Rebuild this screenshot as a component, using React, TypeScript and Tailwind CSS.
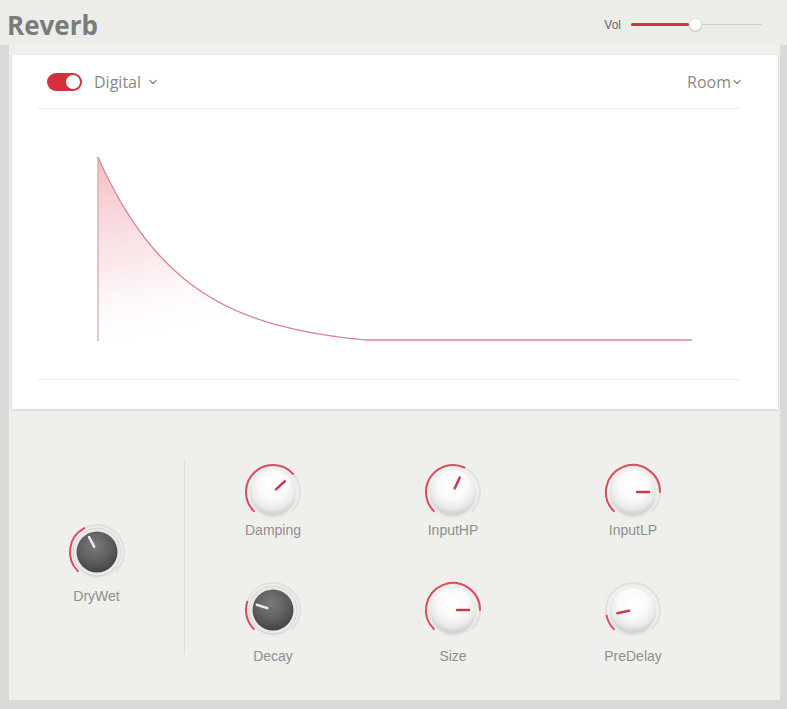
import { ChevronDown } from "lucide-react";

const polar = (a: number, r: number) => {
  const rad = (a * Math.PI) / 180;
  return [35 + r * Math.sin(rad), 35 - r * Math.cos(rad)];
};

const arc = (a0: number, a1: number, r: number) => {
  const [x0, y0] = polar(a0, r);
  const [x1, y1] = polar(a1, r);
  const large = a1 - a0 > 180 ? 1 : 0;
  return `M ${x0} ${y0} A ${r} ${r} 0 ${large} 1 ${x1} ${y1}`;
};

function Knob({ value, label, dark = false, labelTop = "mt-[-5px]" }: { value: number; label: string; dark?: boolean; labelTop?: string }) {
  const [px0, py0] = polar(value, dark ? 6 : 4);
  const [px1, py1] = polar(value, dark ? 17 : 16);
  return (
    <div className="flex flex-col items-center">
      <svg width={70} height={70} viewBox="0 0 70 70">
        <defs>
          <radialGradient id="kLight" cx="50%" cy="35%" r="65%">
            <stop offset="0" stopColor="#ffffff" />
            <stop offset="0.5" stopColor="#fafafa" />
            <stop offset="0.82" stopColor="#e9e9e9" />
            <stop offset="1" stopColor="#d2d2d2" />
          </radialGradient>
          <radialGradient id="kDark" cx="45%" cy="35%" r="70%">
            <stop offset="0" stopColor="#7a7a7a" />
            <stop offset="0.6" stopColor="#5c5c5c" />
            <stop offset="1" stopColor="#3e3e3e" />
          </radialGradient>
          <filter id="kShadow" x="-30%" y="-30%" width="160%" height="160%">
            <feGaussianBlur stdDeviation="1.6" />
          </filter>
        </defs>
        <path d={arc(-135, 135, 27)} stroke="#e0e0df" strokeWidth={2} fill="none" strokeLinecap="round" />
        <path d={arc(-135, value, 27)} stroke="#dc4d5e" strokeWidth={2} fill="none" strokeLinecap="round" />
        <circle cx={35} cy={37.5} r={22} fill="#b5b5b5" opacity={0.55} filter="url(#kShadow)" />
        {dark && <circle cx={35} cy={35} r={24} fill="#e9e9e8" stroke="#d6d6d6" strokeWidth={1} />}
        <circle cx={35} cy={35} r={dark ? 20.5 : 22} fill={dark ? "url(#kDark)" : "url(#kLight)"} />
        <line
          x1={px0}
          y1={py0}
          x2={px1}
          y2={py1}
          stroke={dark ? "#ececec" : "#c93a4d"}
          strokeWidth={2.5}
          strokeLinecap="round"
        />
      </svg>
      <span className={`${labelTop} text-[14px] leading-4 text-[#8f8f8f] font-['Liberation_Sans',sans-serif]`}>{label}</span>
    </div>
  );
}

function DecayGraph() {
  const L = 268;
  const k = 85;
  const e = Math.exp(-L / k);
  const pts: string[] = [];
  for (let t = 0; t <= L; t += 2) {
    const f = (Math.exp(-t / k) - e) / (1 - e);
    pts.push(`${61 + t} ${231 - 183 * f}`);
  }
  const curve = `M ${pts.join(" L ")} L 655 231`;
  const fill = `M 61 231 L ${pts.join(" L ")} L 329 231 Z`;
  return (
    <svg width={703} height={270} viewBox="0 0 703 270">
      <defs>
        <linearGradient id="decayFill" x1="0" y1="0" x2="0.35" y2="1">
          <stop offset="0" stopColor="#e98f9b" stopOpacity={0.6} />
          <stop offset="0.55" stopColor="#f2c1c7" stopOpacity={0.35} />
          <stop offset="1" stopColor="#ffffff" stopOpacity={0} />
        </linearGradient>
      </defs>
      <path d={fill} fill="url(#decayFill)" />
      <line x1={61} y1={48} x2={61} y2={232} stroke="#d3a3a8" strokeWidth={1.2} />
      <path d={curve} fill="none" stroke="#d7868f" strokeWidth={1.3} />
    </svg>
  );
}

export default function App() {
  return (
    <div className="flex h-[709px] w-[787px] flex-col bg-[#ecece9] font-['Open_Sans',sans-serif]">
      <header className="flex h-[45px] items-center justify-between pl-[7px] pr-[25px] pt-[4px]">
        <h1 className="text-[26px] font-bold leading-none text-[#7b7b7b]">Reverb</h1>
        <div className="flex items-center">
          <span className="mr-[10px] text-[12px] text-[#666] font-['Liberation_Sans',sans-serif]">Vol</span>
          <div className="h-[3px] w-[58px] rounded-full bg-[#d2354a]" />
          <div className="h-[13px] w-[13px] rounded-full border border-[#e2e2e2] bg-white shadow-[0_1px_2px_rgba(0,0,0,0.15)]" />
          <div className="h-px w-[60px] bg-[#cfcfcf]" />
        </div>
      </header>

      <div className="flex flex-1 flex-col border-b-[9px] border-l-[9px] border-r-[7px] border-[#dadad8] bg-[#efefec] pt-[10px]">
        <section className="ml-[3px] mr-[2px] bg-white pl-[25px] pr-[38px] pb-[29px] shadow-[0_1px_3px_rgba(0,0,0,0.12)]">
          <div className="flex h-[54px] items-center justify-between border-b border-[#ececec] pl-[10px] pr-0">
            <div className="flex items-center">
              <div className="flex h-[18px] w-[35px] items-center justify-end rounded-full bg-[#d3303e] pr-[2px]">
                <div className="h-[14px] w-[14px] rounded-full bg-white" />
              </div>
              <span className="ml-[12px] text-[16px] text-[#888]">Digital</span>
              <ChevronDown className="ml-[6px] h-[12px] w-[12px] text-[#888]" strokeWidth={2.5} />
            </div>
            <div className="mr-[-3px] flex items-center">
              <span className="text-[16px] text-[#888]">Room</span>
              <ChevronDown className="h-[12px] w-[12px] text-[#888]" strokeWidth={2.5} />
            </div>
          </div>
          <div className="border-b border-[#ececec]">
            <DecayGraph />
          </div>
        </section>

        <section className="flex flex-1 items-start">
          <div className="flex w-[175px] flex-col items-center pt-[108px]">
            <Knob value={-28} label="DryWet" dark labelTop="mt-[1px]" />
          </div>
          <div className="mt-[52px] h-[193px] w-px bg-[#dedede]" />
          <div className="ml-[-2px] grid w-[540px] grid-cols-3 content-start gap-y-[37px] pt-[48px]">
            <Knob value={48} label="Damping" />
            <Knob value={25} label="InputHP" />
            <Knob value={90} label="InputLP" />
            <Knob value={-72} label="Decay" dark labelTop="mt-[3px]" />
            <Knob value={90} label="Size" labelTop="mt-[3px]" />
            <Knob value={-102} label="PreDelay" labelTop="mt-[3px]" />
          </div>
        </section>
      </div>
    </div>
  );
}
